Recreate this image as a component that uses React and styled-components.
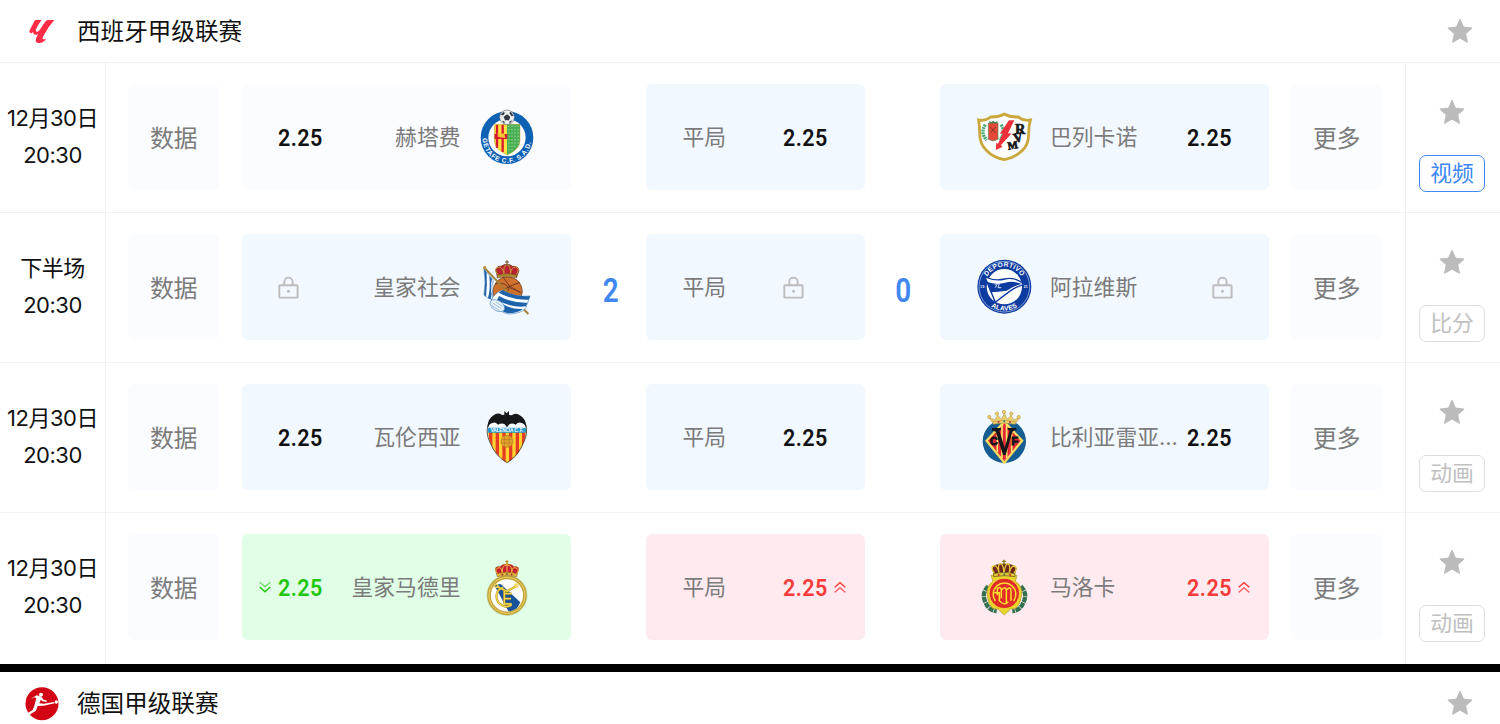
import React from "react";
import styled, { createGlobalStyle } from "styled-components";

const Global = createGlobalStyle`
  *, *::before, *::after { box-sizing: border-box; }
  body {
    margin: 0;
    background: #fff;
    color: #111;
    font-family: Inter, "Noto Sans CJK SC", sans-serif;
    overflow: hidden;
  }
  svg { display: block; flex: none; overflow: visible; }
`;

const Page = styled.main`
  width: 1500px;
  height: 724px;
  overflow: hidden;
  background: #fff;
`;

const LeagueHeader = styled.header`
  height: 63px;
  display: flex;
  align-items: center;
  padding: 0 27px 1px 25px;
  border-bottom: 1px solid #eef0f2;
`;

const LeagueName = styled.h2`
  margin: 0 auto 0 18px;
  padding-top: ${(p) => (p.$lower ? 3 : 2)}px;
  font-size: 23.6px;
  line-height: 34px;
  font-weight: 400;
  color: #111;
`;

const Divider = styled.div`
  height: 8px;
  background: #000;
`;

const MatchRow = styled.article`
  height: ${(p) => (p.$last ? 151 : 150)}px;
  display: flex;
  border-bottom: ${(p) => (p.$last ? 0 : 1)}px solid #f0f2f3;
`;

const Kickoff = styled.div`
  width: 106px;
  padding-top: 37px;
  border-right: 1px solid #eef0f2;
  text-align: center;
  font-size: 22px;
  line-height: 37px;
  letter-spacing: -0.5px;
  white-space: nowrap;
`;

const Markets = styled.div`
  width: 1299px;
  display: flex;
  padding: 21px 22px 0;
`;

const SideButton = styled.button`
  width: 91px;
  height: 106px;
  padding: 0 0 1px;
  border: 0;
  border-radius: 6px;
  background: #fafcff;
  color: #7b7b7b;
  font: inherit;
  font-size: 24px;
  letter-spacing: -0.4px;
`;

const tones = {
  plain: { bg: "#f2f8ff", fg: "#111" },
  faint: { bg: "#fafcff", fg: "#111" },
  up: { bg: "#ffebef", fg: "#f53b3b" },
  down: { bg: "#e0ffe6", fg: "#1fc70f" },
};

const Cell = styled.div`
  width: ${(p) => p.$width}px;
  height: 106px;
  display: flex;
  align-items: center;
  padding: ${(p) => p.$pad};
  border-radius: 6px;
  background: ${(p) => tones[p.$tone].bg};
  color: ${(p) => tones[p.$tone].fg};
`;

const TeamName = styled.span`
  flex: 1;
  min-width: 0;
  padding-bottom: 3px;
  margin: ${(p) => p.$margin || 0};
  text-align: ${(p) => p.$align || "left"};
  color: #7b7b7b;
  font-size: 21.8px;
  white-space: nowrap;
`;

const OddsBox = styled.span`
  position: relative;
  width: 45px;
  padding-top: 2px;
  display: flex;
  justify-content: ${(p) => (p.$end ? "flex-end" : "flex-start")};
  font-family: Roboto, sans-serif;
  font-size: 24.5px;
  line-height: 28px;
  font-weight: 600;
`;

const OddsValue = styled.span`
  display: inline-block;
  letter-spacing: 0.5px;
  margin-right: ${(p) => (p.$end ? 1 : -0.5)}px;
  transform: scaleX(0.88);
  transform-origin: ${(p) => (p.$end ? "right" : "left")} center;
`;

const ArrowSlot = styled.span`
  position: absolute;
  top: 9px;
  ${(p) => (p.$down ? "left: -19px;" : p.$end ? "right: -17px;" : "right: -18px;")}
`;

const Gutter = styled.div`
  width: ${(p) => p.$width}px;
  height: 110px;
  display: flex;
  align-items: center;
  justify-content: center;
  color: #4088f0;
  font-family: Roboto, sans-serif;
  font-weight: 600;
  font-size: 34px;
`;

const Goals = styled.span`
  transform: translate(${(p) => p.$shift}px, 1px) scaleX(0.82);
`;

const Actions = styled.div`
  flex: 1;
  display: flex;
  flex-direction: column;
  align-items: center;
  padding: 36px 2px 0 0;
  border-left: 1px solid #eef0f2;
`;

const MediaTag = styled.span`
  width: 66px;
  height: 37px;
  margin-top: 30px;
  border: 1px solid ${(p) => (p.$active ? "#3d88f5" : "#dedede")};
  border-radius: 7px;
  color: ${(p) => (p.$active ? "#3d88f5" : "#c0c0c0")};
  font-size: 21.8px;
  line-height: 35px;
  text-align: center;
`;

const Star = () => (
  <svg width="26" height="26" viewBox="0 0 26 26" fill="#bbb" stroke="#bbb" strokeWidth="1" strokeLinejoin="round">
    <path d="M13 1.2 16.5 9.1 25.1 10.1 18.7 15.8 20.5 24.4 13 20.1 5.5 24.4 7.3 15.8 .9 10.1 9.5 9.1Z" />
  </svg>
);

const Lock = () => (
  <svg width="21" height="24" viewBox="0 0 21 24" fill="none" stroke="#bcbcbc" strokeWidth="1.9">
    <rect x="1.3" y="9.2" width="18.3" height="12.4" rx=".7" />
    <path d="M6.3 9V5.8a4.15 4.15 0 0 1 8.3 0V9" />
    <circle cx="10.5" cy="15.3" r="1.5" fill="#bcbcbc" stroke="none" />
  </svg>
);

const Chevrons = ({ down }) => (
  <svg width="12" height="13" viewBox="0 0 12 13" fill="none" stroke="currentColor" strokeWidth="1.4">
    {down ? (
      <><path d="M.7 1.2 6 5.6l5.3-4.4" opacity=".6" /><path d="M.7 6 6 10.8 11.3 6" /></>
    ) : (
      <><path d="M.7 6.2 6 1.6l5.3 4.6" /><path d="M.7 11.4 6 6.8l5.3 4.6" opacity=".75" /></>
    )}
  </svg>
);

const LaLiga = () => (
  <svg width="34" height="34" viewBox="75 42 102 102" fill="#ff2c46">
    <path d="M105 60h20q-11 14-17 28-3 7 3 7 5 0 8-5l16-24q4-6 10-6h18q-18 20-31 45-8 12-1 13 4 0 7-2-6 11-18 13-13 2-13-8 0-5 4-12l4-8q-7 6-13 2-4-3-2-8-6 6-9 4-5-4 0-12z" />
  </svg>
);

const Bundesliga = () => (
  <svg width="34" height="34" viewBox="75 470 102 102">
    <circle cx="126" cy="523" r="49.5" fill="#d20515" />
    <g fill="#fff">
      <circle cx="123" cy="496" r="6" />
      <circle cx="169" cy="518" r="5" />
      <path d="m96 506 14-8 14 4 7 9 10 3-2 4-11-2-6-4-4 10 14 1 30-5 2 4-33 7-18 1-5 14-15 9-2 3-6-1-1-5 14-8 5-13 6-23-7-2-8 5z" />
    </g>
  </svg>
);

const Crown = () => (
  <g stroke="#936b18" strokeWidth="1.5">
    <path d="M81 91 76 74q0-11 13-9 8-8 22-8t22 8q13-2 13 9l-6 17q-29-9-59 0z" fill="#c91f32" />
    <path d="M83 87q-13-17 5-19 8 0 9 19m0 0q-3-27 14-27t14 27m0 0q0-20 9-19 18 2 5 19M111 47v40" fill="none" stroke="#eebd42" strokeWidth="3" />
    <path d="M111 45v13m-5-8h10" stroke="#b78726" strokeWidth="3" />
    <path d="M81 86q30-9 60 0v9q-30-7-60 0z" fill="#e3b341" />
    <circle cx="97" cy="89" r="2.4" fill="#b51e33" /><circle cx="111" cy="87" r="2.4" fill="#287255" /><circle cx="125" cy="89" r="2.4" fill="#b51e33" />
  </g>
);

const Getafe = () => (
  <>
    <circle cx="111" cy="128" r="79" fill="#0d62b4" />
    <circle cx="111" cy="128" r="56" fill="#fff" />
    <path d="M73 88h77v49q0 25-39 43-38-18-38-43z" fill="#ffe23e" />
    <path d="M111 88h39v49q0 25-39 43z" fill="#49ae54" />
    <path d="M81 89v70M98 89v82" stroke="#d81931" strokeWidth="7" />
    <path d="M73 117h39v15H73z" fill="#d81931" />
    <path d="m83 113 20 3 3 13-22-3z" fill="#f5c630" />
    <path d="M117 92v80m9-80v75m9-75v68m9-68v62" stroke="#b9eaac" strokeWidth="2.5" strokeDasharray="4 6" />
    <path d="M73 88h77v49q0 25-39 43-38-18-38-43z" fill="none" stroke="#b49b4b" strokeWidth="1.5" />
    <circle cx="111" cy="67" r="22" fill="#eceff0" stroke="#686c72" strokeWidth="2" />
    <path d="m111 58 10 7-4 11h-12l-4-11zM92 60l8-9 5 2-5 8zM122 50l9 12-7 1-6-9zM96 77l7 2 1 8zM127 76l-8 3-1 8z" fill="#30373e" />
    <path id="getafe-arc" d="M38.5 122A73 73 0 1 0 183.5 122" fill="none" />
    <text fill="#fff" fontSize="19.5" fontWeight="700"><textPath href="#getafe-arc" startOffset="8" textLength="218">GETAFE C.F. S.A.D.</textPath></text>
  </>
);

const Rayo = () => (
  <>
    <path d="M41 75q20 4 36-9 23 1 41-9 18 10 41 9 18 13 37 9-5 17-5 42 0 34-22 52-20 19-51 25-32-6-52-26-22-20-22-53 0-22-3-40z" fill="#fff" stroke="#cba83c" strokeWidth="8.5" />
    <path d="M70 84h29v49l-15 5-14-5z" fill="#e54837" stroke="#5b8a51" strokeWidth="2" />
    <path d="m76 96 16 18m0-18-16 18" stroke="#823d33" strokeWidth="3" />
    <path d="M61 89q-16 25 4 46m43-46q16 25-4 46" fill="none" stroke="#4aa878" strokeWidth="10" strokeDasharray="6 2" />
    <path d="M73 85h24v-7l-7 4-5-5-6 5-6-4z" fill="#447d4e" />
    <path d="m148 76-19 39 10 1-31 34 4 6-20 9 2-22 5 3 15-31-10 2 28-41z" fill="#ee303a" />
    <g fill="#16171a" stroke="#16171a" strokeWidth="2" fontFamily="Liberation Serif, serif" fontWeight="700">
      <text x="150" y="117" fontSize="43">R</text>
      <text x="0" y="0" fontSize="40" transform="translate(148 143) rotate(-12)">V</text>
      <text x="0" y="0" fontSize="33" transform="translate(130 164) rotate(-10)">M</text>
    </g>
  </>
);

const Sociedad = () => (
  <>
    <circle cx="113" cy="139" r="44" fill="#cf702d" stroke="#653a25" strokeWidth="2" />
    <path d="M75 117q27-8 41 10l38 15M79 155q26-31 71-42M117 128q-5 20-33 31M99 97l20 26 30 19" fill="none" stroke="#713d23" strokeWidth="3" />
    <path d="M83 96 77 76q3-14 16-12 18-13 35 0 17-2 19 13l-7 19q-29-9-57 0z" fill="#b92332" stroke="#5b3920" strokeWidth="2" />
    <path d="M84 89q-16-20 4-23 10 1 14 22m0 0q-3-28 9-28t10 28m0 0q3-23 15-22 16 3 3 23" fill="none" stroke="#c99b3a" strokeWidth="3" />
    <path d="M81 90q30-8 59 0v9q-29-7-59 0z" fill="#b18b31" stroke="#644921" strokeWidth="1.5" />
    <path d="M111 45v18m-6-12h12" stroke="#785323" strokeWidth="3" />
    <path d="m43 68 132 139" stroke="#a78137" strokeWidth="6" />
    <circle cx="44" cy="68" r="5" fill="#bb8d32" />
    <path d="m42 72 28 33q-9 20-2 40l-2 19q-15-4-24-15 6-34 0-77z" fill="#fff" stroke="#1a5e9d" strokeWidth="1.5" />
    <path d="m42 72 8 10q2 38-2 73l-6-6q7-35 0-77m16 20 8 9q-6 27-1 46l-3 16-8-4q8-28 4-67z" fill="#1d63ac" />
    <path d="M62 170q13-29 35-34 41 22 83 17l-13 37q-14 16-52 17-31-6-53-37z" fill="#fff" stroke="#2165a6" strokeWidth="1.5" />
    <path d="M97 136q41 22 83 17l-4 11q-44 3-90-21zm-10 17q37 21 85 20l-4 11q-41 5-87-18zm12 25q28 16 60 14-18 13-44 13-12-2-22-9z" fill="#1d63ac" />
    <ellipse cx="82" cy="182" rx="24" ry="15" transform="rotate(32 82 182)" fill="#e8f2fa" stroke="#5a92c4" strokeWidth="2" />
    <path d="m68 174 26 17m-30-10 24 16m-10-26 20 14" stroke="#7ca7cd" strokeWidth="2" />
  </>
);

const Alaves = () => (
  <>
    <circle cx="118" cy="125" r="81" fill="#0d3ba0" />
    <circle cx="118" cy="125" r="76" fill="none" stroke="#bbcef0" strokeWidth="2" />
    <circle cx="118" cy="125" r="53" fill="#fff" />
    <path d="M60 96q30 13 59 6 32-7 58 16-23 7-43 21-22 16-43 33z" fill="#fff" stroke="#0d3ba0" strokeWidth="4" />
    <path d="M65 110q28 10 55 3 24-7 50 4-26 6-45 20-25 3-49 5z" fill="#0d3ba0" />
    <path d="m89 118 14-3-4 13h10m-18 0 5-10" fill="none" stroke="#fff" strokeWidth="2.5" />
    <path id="alaves-top" d="M58 125a60 60 0 0 1 120 0" fill="none" />
    <path id="alaves-bottom" d="M46 125a72 72 0 0 0 144 0" fill="none" />
    <g fill="#fff" fontSize="20" fontWeight="700" letterSpacing=".7">
      <text><textPath href="#alaves-top" startOffset="50%" textAnchor="middle">DEPORTIVO</textPath></text>
      <text><textPath href="#alaves-bottom" startOffset="50%" textAnchor="middle">ALAVES</textPath></text>
      <text x="46" y="129" fontSize="10">19</text><text x="176" y="129" fontSize="10">21</text>
    </g>
  </>
);

const Valencia = () => (
  <>
    <clipPath id="valencia-shield"><path d="M55 87h111q6 27-5 55-16 43-50 61-34-19-50-61-11-28-6-55z" /></clipPath>
    <g clipPath="url(#valencia-shield)">
      <path d="M45 75h130v140H45z" fill="#ffd22e" />
      <path d="M62 112v91m20-91v91m20-91v91m20-91v91m20-91v91m19-91v91" stroke="#e63b25" strokeWidth="10" />
      <path d="M50 73h122v29H50z" fill="#fff" />
      <path d="M50 98h123v15H50z" fill="#2499ca" />
    </g>
    <path d="M55 87q-9 27 5 55 17 43 51 61 34-19 50-61 14-28 6-55" fill="none" stroke="#3b3524" strokeWidth="2.5" />
    <path d="M53 99q-2-27 20-40 13-7 23 1l7-1V48l7 7 7-7v12l8 1q10-8 22-2 23 12 22 40-5-15-17-16-8-2-15 6-11-7-19-1l-7 9-7-9q-8-5-20 1-7-8-14-6-12 1-17 16z" fill="#15191a" />
    <text x="111" y="111" textAnchor="middle" fill="#fff" fontSize="14" fontWeight="700" textLength="98">VALENCIA C. F.</text>
    <circle cx="111" cy="139" r="18" fill="#e2a62d" stroke="#b87721" strokeWidth="2" />
    <path d="M94 134h34m-34 10h34M104 122v34m13-34v34" stroke="#bd7724" strokeWidth="2" />
  </>
);

const Villarreal = () => (
  <>
    <circle cx="118" cy="139" r="65" fill="#165d94" />
    <path d="m118 76 57 61-57 70-57-70z" fill="#ffe36a" stroke="#e8c84f" strokeWidth="2" />
    <path d="m118 85 49 52-49 61-49-61z" fill="#e42c39" />
    <path d="M97 104v68m14-86v104m14-104v104m15-86v68" stroke="#ffe36a" strokeWidth="5" />
    <g fill="#141619" stroke="#141619" strokeWidth="3" fontWeight="800" fontFamily="Liberation Sans, sans-serif">
      <text x="75" y="151" fontSize="34" textLength="23" lengthAdjust="spacingAndGlyphs">C</text>
      <text x="139" y="151" fontSize="34">F</text>
    </g>
    <path d="M81 99h27v5q-6 0-4 6l15 49 14-49q2-6-5-6v-5h26v7q-10 0-12 5l-20 69h-8L93 112q-1-5-12-5z" fill="#141619" />
    <g fill="#edcf6c" stroke="#a98837" strokeWidth="1.5">
      <path d="m84 83-13-15 19 6 8-13 12 12 8-18 9 18 11-12 8 14 18-7-13 18q-33-13-67-3z" />
      <circle cx="73" cy="66" r="5" /><circle cx="96" cy="56" r="5" /><circle cx="117" cy="51" r="5" /><circle cx="139" cy="56" r="5" /><circle cx="161" cy="66" r="5" />
      <path d="M84 80q34-8 67 0v8q-34-7-67 0z" />
    </g>
    <circle cx="101" cy="81" r="3" fill="#c93340" /><circle cx="118" cy="79" r="3" fill="#2e8063" /><circle cx="135" cy="81" r="3" fill="#c93340" />
  </>
);

const Madrid = () => (
  <>
    <clipPath id="madrid-disc"><circle cx="111" cy="151" r="48" /></clipPath>
    <circle cx="111" cy="151" r="54" fill="#fff" stroke="#c4a436" strokeWidth="11" />
    <circle cx="111" cy="151" r="54" fill="none" stroke="#f0db74" strokeWidth="2.5" />
    <circle cx="111" cy="151" r="60" fill="none" stroke="#9a9858" strokeWidth="1" />
    <path clipPath="url(#madrid-disc)" d="m68 117 25 1 58 54-18 34-17-6-35-65z" fill="#17539b" />
    <g fill="none" stroke="#ad8c24" strokeWidth="7">
      <path d="M125 179q-13 11-29 2-19-11-16-32 3-18 20-21m-20-4 31 15 28-16M103 138v39m0-31h22m-22 15h20m-20 16h22" />
    </g>
    <g fill="none" stroke="#f1d84f" strokeWidth="4">
      <path d="M125 179q-13 11-29 2-19-11-16-32 3-18 20-21m-20-4 31 15 28-16M103 138v39m0-31h22m-22 15h20m-20 16h22" />
      <circle cx="79" cy="123" r="5" /><circle cx="139" cy="122" r="5" />
    </g>
    <Crown />
  </>
);

const Mallorca = () => (
  <>
    <path d="M70 124q-23 22-7 51 9 21 32 24m72-75q23 22 7 51-9 21-32 24" fill="none" stroke="#33704f" strokeWidth="13" strokeDasharray="16 2" />
    <path d="M78 91q40-8 78 0l-5 18q25 16 18 46-3 22-17 35l-16 3-18 17-18-17-17-3q-13-12-16-35-5-31 17-46z" fill="#e9d52c" stroke="#a8932a" strokeWidth="2" />
    <circle cx="118" cy="145" r="46" fill="#df2c29" stroke="#edce2d" strokeWidth="4" />
    <path d="M91 168a34 34 0 1 1 55 0M97 151v-20q10-9 12 4v25m0-25q13-14 15 0v43m0-43q13-12 14 1v31M88 143h15v24q13 17 27 3" fill="none" stroke="#ffe02d" strokeWidth="4.5" />
    <path d="m88 93-6-25q12-13 35-11 24-2 37 12l-7 24q-29-6-59 0z" fill="#6d2620" stroke="#5b511c" strokeWidth="2" />
    <path d="M91 89q-18-22-3-27 10 1 15 25m0 0q-7-30 4-31 8 2 10 30 3-28 11-30 10 3 4 31m0 0q5-24 15-24 14 5-3 27" fill="none" stroke="#e3c937" strokeWidth="4" />
    <path d="M86 86q31-8 64 0v9q-32-6-64 0z" fill="#e3c937" stroke="#61541e" strokeWidth="2" />
    <path d="M117 44v14m-6-9h12" stroke="#8c7f22" strokeWidth="4" />
    <circle cx="101" cy="90" r="3" fill="#c92b2b" /><circle cx="118" cy="88" r="3" fill="#33704f" /><circle cx="135" cy="90" r="3" fill="#c92b2b" />
  </>
);

const Crest = ({ art: Art }) => (
  <svg width="60" height="56" viewBox="24 42 180 168" fontFamily="Liberation Sans, sans-serif"><Art /></svg>
);

const Odds = ({ value, tone, end }) => (
  <OddsBox $end={end}>
    {value ? <OddsValue $end={end}>{value}</OddsValue> : <Lock />}
    {(tone === "up" || tone === "down") && <ArrowSlot $down={tone === "down"} $end={end}><Chevrons down={tone === "down"} /></ArrowSlot>}
  </OddsBox>
);

const matches = [
  { day: "12月30日", home: "赫塔费", homeArt: Getafe, away: "巴列卡诺", awayArt: Rayo, odds: "2.25", tones: ["faint", "plain", "plain"], media: "视频", live: true },
  { day: "下半场", home: "皇家社会", homeArt: Sociedad, away: "阿拉维斯", awayArt: Alaves, goals: ["2", "0"], tones: ["plain", "plain", "plain"], media: "比分" },
  { day: "12月30日", home: "瓦伦西亚", homeArt: Valencia, away: "比利亚雷亚...", awayArt: Villarreal, odds: "2.25", tones: ["plain", "plain", "plain"], media: "动画" },
  { day: "12月30日", home: "皇家马德里", homeArt: Madrid, away: "马洛卡", awayArt: Mallorca, odds: "2.25", tones: ["down", "up", "up"], media: "动画" },
];

const Match = ({ match, last }) => (
  <MatchRow $last={last}>
    <Kickoff>{match.day}<br />20:30</Kickoff>
    <Markets>
      <SideButton>数据</SideButton>
      <Gutter $width={23} />
      <Cell $width={329} $tone={match.tones[0]} $pad="0 33px 0 36px">
        <Odds value={match.odds} tone={match.tones[0]} />
        <TeamName $align="right" $margin="0 17.5px 0 0">{match.home}</TeamName>
        <Crest art={match.homeArt} />
      </Cell>
      <Gutter $width={75}>{match.goals && <Goals $shift={2}>{match.goals[0]}</Goals>}</Gutter>
      <Cell $width={219} $tone={match.tones[1]} $pad="0 37px 0 36.5px">
        <TeamName>平局</TeamName>
        <Odds value={match.odds} tone={match.tones[1]} />
      </Cell>
      <Gutter $width={75}>{match.goals && <Goals $shift={0.5}>{match.goals[1]}</Goals>}</Gutter>
      <Cell $width={329} $tone={match.tones[2]} $pad="0 36px 0 33px">
        <Crest art={match.awayArt} />
        <TeamName $margin="0 0 0 17px">{match.away}</TeamName>
        <Odds value={match.odds} tone={match.tones[2]} end />
      </Cell>
      <Gutter $width={22} />
      <SideButton>更多</SideButton>
    </Markets>
    <Actions>
      <Star />
      <MediaTag $active={match.live}>{match.media}</MediaTag>
    </Actions>
  </MatchRow>
);

export default function App() {
  return (
    <Page>
      <Global />
      <LeagueHeader><LaLiga /><LeagueName>西班牙甲级联赛</LeagueName><Star /></LeagueHeader>
      {matches.map((match, i) => <Match key={match.home} match={match} last={i === matches.length - 1} />)}
      <Divider />
      <LeagueHeader><Bundesliga /><LeagueName $lower>德国甲级联赛</LeagueName><Star /></LeagueHeader>
    </Page>
  );
}
